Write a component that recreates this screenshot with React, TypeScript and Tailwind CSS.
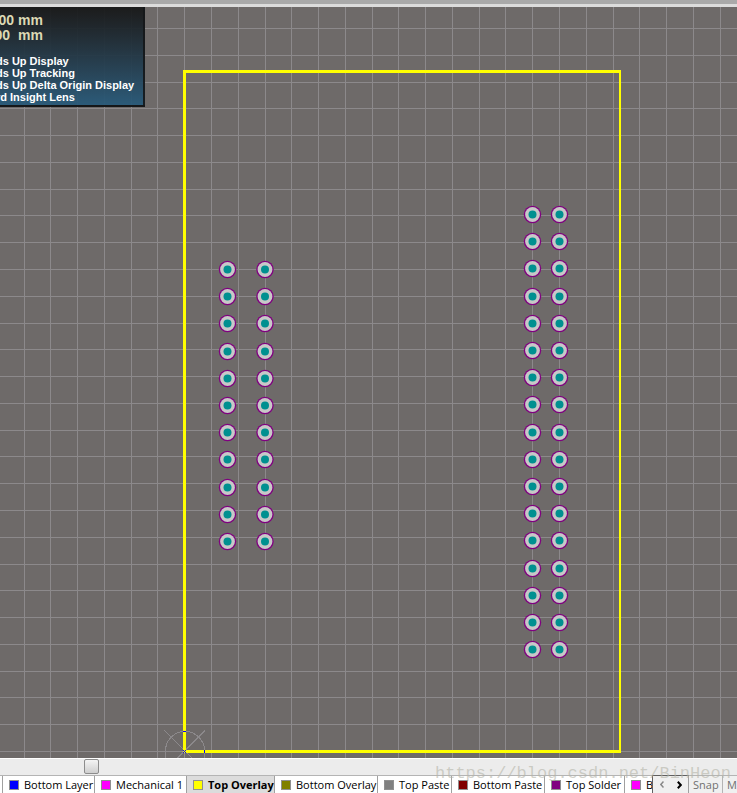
import type { ReactNode } from "react";

const PITCH = 26.775;
const gridX = Array.from({ length: 80 }, (_, k) => Math.round(184.2 + PITCH * (k - 6)));
const gridY = Array.from({ length: 60 }, (_, k) => Math.round(743.95 - PITCH * (27 - k)));

const columns = [
  { x: 227.5, top: 262, count: 11 },
  { x: 265, top: 262, count: 11 },
  { x: 532.5, top: 207, count: 17 },
  { x: 559.5, top: 207, count: 17 },
];

const layers = [
  { name: "Bottom Layer", swatch: "bg-[#0000ff]", width: "w-[92px]" },
  { name: "Mechanical 1", swatch: "bg-[#ff00ff]", width: "w-[92px]" },
  { name: "Top Overlay", swatch: "bg-[#ffff00]", width: "w-[88px]", active: true },
  { name: "Bottom Overlay", swatch: "bg-[#808000]", width: "w-[103px]" },
  { name: "Top Paste", swatch: "bg-[#808080]", width: "w-[74px]" },
  { name: "Bottom Paste", swatch: "bg-[#800000]", width: "w-[93px]" },
  { name: "Top Solder", swatch: "bg-[#800080]", width: "w-[80px]" },
  { name: "B", swatch: "bg-[#ff00ff]", width: "w-[103px]" },
];

function Board() {
  return (
    <svg className="block h-full w-full" shapeRendering="crispEdges" role="img" aria-label="Board layout">
      <g fill="#8c898b">
        {gridX.map((x) => (
          <rect key={x} x={x} y="0" width="1" height="100%" />
        ))}
        {gridY.map((y) => (
          <rect key={y} x="0" y={y} width="100%" height="1" />
        ))}
      </g>
      <g fill="#ffff00">
        <rect x="183" y="63" width="438" height="3" />
        <rect x="183" y="63" width="3" height="682" />
        <rect x="619" y="63" width="2" height="682" />
        <rect x="184" y="743" width="437" height="3" />
      </g>
      <g fill="none" stroke="#8c898b">
        <path d="M165.500 751v-7a19.500 19.500 0 0 1 17.500-19.500M186 724.500a19.500 19.500 0 0 1 18.500 18.500M204.500 746v5" />
        <path d="M164.500 723.500l18.500 18.500M205 723.500L186 742.500M183 745.500l-6 6M187 746l5 5" />
      </g>
      <path d="M183 724h3v1h-3zM204 743h1v3h-1zM183 743h1v1h-1zM185 743h1v1h-1zM184 744h1v1h-1zM183 745h1v1h-1zM185 745h1v1h-1z" fill="#0000ff" />
      {columns.map((column) =>
        Array.from({ length: column.count }, (_, i) => {
          const y = Math.round(column.top + i * 27.2) + 0.5;
          return (
            <g key={`${column.x}-${i}`} shapeRendering="geometricPrecision">
              <circle cx={column.x} cy={y} r="8.700" fill="#800080" />
              <circle cx={column.x} cy={y} r="7.400" fill="#c8c8c8" />
              <circle cx={column.x} cy={y} r="4" fill="#009090" />
            </g>
          );
        }),
      )}
    </svg>
  );
}

function Line({ children }: { children: ReactNode }) {
  return <p className="text-[11px] leading-3 text-white">{children}</p>;
}

export default function App() {
  return (
    <div className="flex h-screen flex-col overflow-hidden bg-[#ececec] font-['Open_Sans','Noto_Sans',sans-serif]">
      <div className="h-[7px] shrink-0 border-b-[3px] border-[#dcdcdc] bg-[#a9a9a9]" />
      <main className="relative min-h-0 flex-1 overflow-hidden bg-[#6e6a69]">
        <Board />
        <aside className="absolute top-0 left-0 h-[100px] w-[145px] overflow-hidden border-r-2 border-b-2 border-[#151719]/90 bg-linear-to-b from-[#171717]/94 to-[#285a7a]/94 font-['Liberation_Sans',Arial,sans-serif] font-bold whitespace-pre">
          <div className="-ml-1">
            <div className="pt-1.5 pb-3 pl-1 text-[14px] leading-[15px] text-[#dcd9b4]">
              <p className="flex gap-1"><span className="flex w-3.5 justify-end">00</span><span>mm</span></p>
              <p className="flex gap-1"><span className="flex w-3.5 justify-end pr-1">00</span><span>mm</span></p>
            </div>
            <Line>ds Up Display</Line>
            <Line>ds Up Tracking</Line>
            <Line>ds Up Delta Origin Display</Line>
            <Line>rd Insight Lens</Line>
          </div>
        </aside>
      </main>
      <div className="relative flex h-[17px] shrink-0 border-t border-white bg-[#ececec] pl-[84px]">
        <button aria-label="Scroll horizontally" className="h-[15px] w-[15px] rounded-[2px] border border-[#8c8c8c] bg-linear-to-b from-[#f4f4f4] to-[#cfcfcf]" />
        <span className="pointer-events-none absolute top-0 left-[435px] z-10 font-['Liberation_Mono',monospace] text-[17px] leading-[30px] whitespace-nowrap text-[#b4b4a8]/60">
          https://blog.csdn.net/BinHeon
        </span>
      </div>
      <nav className="flex h-[18px] shrink-0 bg-[#f0f0f0] text-[11px] leading-[18px] whitespace-nowrap text-black">
        <div className="flex min-w-0 flex-1 overflow-hidden border-t border-[#b4b4b4] bg-white pl-0.5">
          {layers.map((layer) => (
            <button
              key={layer.name}
              className={`flex shrink-0 items-center gap-[5px] border-l border-[#a0a0a0] pl-1.5 ${layer.width} ${layer.active ? "bg-[#dcdcdc] font-bold" : "bg-white"}`}
            >
              <span className={`size-2.5 shrink-0 border border-[#909090] ${layer.swatch}`} />
              {layer.name}
            </button>
          ))}
        </div>
        <div className="flex w-[37px] shrink-0 border-t border-r border-l border-[#a0a0a0] border-t-[#606060] border-l-[#606060]">
          <button aria-label="Previous layers" className="flex flex-1 items-center justify-center">
            <svg width="4" height="7" viewBox="0 0 4 7" fill="none" stroke="#888"><path d="M3.500 .5L.8 3.500l2.700 3" strokeWidth="1.500" /></svg>
          </button>
          <button aria-label="Next layers" className="flex flex-1 items-center justify-center">
            <svg width="5" height="8" viewBox="0 0 5 8" fill="none" stroke="#000"><path d="M.8.8L3.800 4 .8 7.200" strokeWidth="2" /></svg>
          </button>
        </div>
        <button className="w-[34px] shrink-0 border-t border-r border-[#b4b4b4] pl-1 text-left text-[#707070]">Snap</button>
        <button className="w-3.5 shrink-0 border-t border-[#b4b4b4] pl-1 text-left text-[#707070]">M</button>
      </nav>
    </div>
  );
}
